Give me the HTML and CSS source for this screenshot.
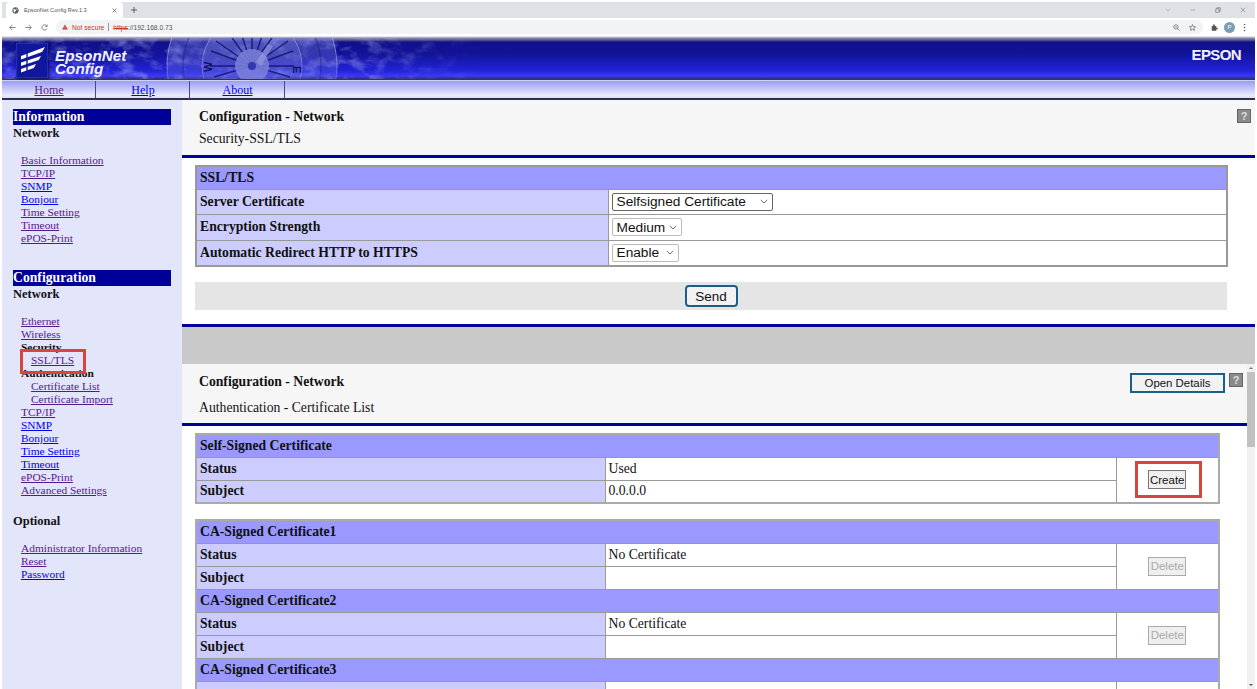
FILE: index.html
```html
<!DOCTYPE html>
<html lang="en">
<head>
<meta charset="utf-8">
<title>EpsonNet Config Rev.1.3</title>
<link rel="stylesheet" href="styles.css">
</head>
<body>
<div class="window">
  <div class="tabstrip">
    <div class="tab">
      <svg class="favicon" viewBox="0 0 10 10"><circle cx="5" cy="5" r="4.500" fill="#5f6368"/><path d="M2 2.500l3 1 1 2-2 1 0 2-1.500-2zM7 1.500l1.500 2-2 .5z" fill="#fff"/></svg>
      <span class="tab-title">EpsonNet Config Rev.1.3</span>
      <svg class="tab-x" viewBox="0 0 8 8"><path d="M1 1l6 6M7 1l-6 6" stroke="#444" stroke-width="1.100"/></svg>
    </div>
    <svg class="tab-plus" viewBox="0 0 8 8"><path d="M4 0v8M0 4h8" stroke="#444" stroke-width="1.100"/></svg>
    <div class="winbtns">
      <svg viewBox="0 0 8 8"><path d="M1 2.500l3 3 3-3" fill="none" stroke="#999" stroke-width=".8"/></svg>
      <svg viewBox="0 0 8 8"><path d="M1 4h6" stroke="#999" stroke-width=".9"/></svg>
      <svg viewBox="0 0 8 8"><path d="M1 2.500h4.500v4.500H1zM2.500 2.500V1H7v4.500H5.500" fill="none" stroke="#666" stroke-width=".8"/></svg>
      <svg viewBox="0 0 8 8"><path d="M1 1l6 6M7 1l-6 6" stroke="#777" stroke-width=".8"/></svg>
    </div>
  </div>
  <div class="toolbar">
    <svg class="nav-ic" viewBox="0 0 8 8"><path d="M7.500 4H1M3.800 1L.8 4l3 3" fill="none" stroke="#666" stroke-width=".9"/></svg>
    <svg class="nav-ic" viewBox="0 0 8 8"><path d="M.5 4H7M4.200 1l3 3-3 3" fill="none" stroke="#666" stroke-width=".9"/></svg>
    <svg class="nav-ic" viewBox="0 0 8 8"><path d="M6.800 5.200A3 3 0 1 1 6.500 2.200M7 .6v2.200H4.800" fill="none" stroke="#666" stroke-width=".9"/></svg>
    <div class="omnibox">
      <svg class="warn" viewBox="0 0 8 8"><path d="M4 .8L7.800 7.200H.2z" fill="#c5362c"/><path d="M4 3v2.200M4 5.800v.7" stroke="#fff" stroke-width=".7"/></svg>
      <span class="notsecure">Not secure</span>
      <span class="sep"></span>
      <span class="url"><span class="https">https</span>://192.168.0.73</span>
      <span class="omni-right">
        <svg viewBox="0 0 8 8"><circle cx="3.300" cy="3.300" r="2.500" fill="none" stroke="#666" stroke-width=".8"/><path d="M5.200 5.200L7.500 7.500M2 3.300h2.600" stroke="#666" stroke-width=".8"/></svg>
        <svg viewBox="0 0 10 10"><path d="M5 .8l1.300 2.900 3.100.3-2.400 2 .8 3.100L5 7.500 2.200 9.100 3 6 .6 4l3.100-.3z" fill="none" stroke="#555" stroke-width=".9"/></svg>
      </span>
    </div>
    <svg class="ext" viewBox="0 0 10 10"><path d="M1 3h2V1.500a1.200 1.200 0 0 1 2.400 0V3h2.200v2.200h1a1.200 1.200 0 0 1 0 2.400h-1V9.500H1z" fill="#555"/></svg>
    <span class="avatar">P</span>
    <svg class="dots" viewBox="0 0 4 12"><circle cx="2" cy="2" r="1" fill="#555"/><circle cx="2" cy="6" r="1" fill="#555"/><circle cx="2" cy="10" r="1" fill="#555"/></svg>
  </div>

  <div class="page">
    <header class="banner">
      <svg class="compass" viewBox="0 0 480 41">
        <defs>
          <filter id="mottle" x="0" y="0" width="100%" height="100%">
            <feTurbulence type="fractalNoise" baseFrequency="0.06 0.1" numOctaves="4" seed="7"/>
            <feColorMatrix type="matrix" values="0 0 0 0 0.42  0 0 0 0 0.45  0 0 0 0 0.95  1.700 0 0 0 -0.780"/>
          </filter>
          <linearGradient id="fade" x1="0" x2="1" y1="0" y2="0">
            <stop offset="0" stop-color="#fff" stop-opacity=".7"/>
            <stop offset=".72" stop-color="#fff" stop-opacity=".8"/>
            <stop offset="1" stop-color="#fff" stop-opacity="0"/>
          </linearGradient>
          <linearGradient id="vfade" x1="0" x2="0" y1="0" y2="1">
            <stop offset="0" stop-color="#fff" stop-opacity=".9"/>
            <stop offset=".7" stop-color="#fff" stop-opacity=".65"/>
            <stop offset="1" stop-color="#fff" stop-opacity=".45"/>
          </linearGradient>
          <mask id="mfade"><rect width="480" height="41" fill="url(#fade)"/></mask>
          <mask id="mv"><rect width="480" height="41" fill="url(#vfade)"/></mask>
        </defs>
        <rect width="480" height="41" filter="url(#mottle)" mask="url(#mfade)"/>
        <g mask="url(#mv)">
          <circle cx="250" cy="28" r="85" fill="#6a70d8" fill-opacity=".5"/>
          <circle cx="250" cy="28" r="85" fill="none" stroke="#c5c8f5" stroke-opacity=".7"/>
          <circle cx="250" cy="28" r="69" fill="none" stroke="#20236e" stroke-opacity=".5" stroke-width="1.500"/>
          <circle cx="250" cy="28" r="50" fill="#7478dc" fill-opacity=".5"/>
          <circle cx="250" cy="28" r="50" fill="none" stroke="#c9ccf5" stroke-opacity=".6"/>
        </g>
        <g stroke="#0e1158" stroke-width="1.500" stroke-opacity=".8">
          <path d="M250 28L250 -8M250 28L262 -8M250 28L238 -8M250 28L274 -6M250 28L226 -6M250 28L286 3M250 28L214 3M250 28L291 13M250 28L209 13M250 28L292 28M250 28L208 28M250 28L288 39M250 28L212 39"/>
        </g>
        <circle cx="250" cy="28" r="17" fill="#7d81da" fill-opacity=".85"/>
        <circle cx="250" cy="28" r="4" fill="#3038b0"/>
        <path d="M254 24L266 6l5 2-12 20z" fill="#9a9de2" fill-opacity=".6"/>
        <text class="cardinal" transform="translate(210 34) rotate(-90)">W</text>
        <text class="cardinal" transform="translate(291 28) rotate(90)">E</text>
      </svg>
      <div class="logo">
        <svg class="logo-mark" viewBox="0 0 32 35">
          <rect width="32" height="35" fill="#10179a" stroke="#3c45c0"/>
          <path d="M5 13L29 4l-3 5L5 16.500zM5 19.500L25 13l-2.200 4L5 23zM5 26l15-5-2.200 4L5 29.500z" fill="#fff"/>
          <path d="M11 8v22" stroke="#10179a" stroke-width="1.400"/>
        </svg>
        <div class="logo-text">EpsonNet<br>Config</div>
      </div>
      <div class="epson">EPSON</div>
    </header>
    <nav class="topnav">
      <a class="nav-cell visited" href="#home">Home</a>
      <a class="nav-cell" href="#help">Help</a>
      <a class="nav-cell" href="#about">About</a>
    </nav>

    <div class="body">
      <aside class="sidebar">
        <h2 class="side-h first">Information</h2>
        <div class="side-sub">Network</div>
        <ul class="links">
          <li><a class="visited" href="#a">Basic Information</a></li>
          <li><a class="visited" href="#a">TCP/IP</a></li>
          <li><a href="#b">SNMP</a></li>
          <li><a href="#b">Bonjour</a></li>
          <li><a class="visited" href="#a">Time Setting</a></li>
          <li><a class="visited" href="#a">Timeout</a></li>
          <li><a class="visited" href="#a">ePOS-Print</a></li>
        </ul>
        <h2 class="side-h second">Configuration</h2>
        <div class="side-sub">Network</div>
        <ul class="links">
          <li><a class="visited" href="#a">Ethernet</a></li>
          <li><a class="visited" href="#a">Wireless</a></li>
          <li class="group">Security</li>
          <li class="nested"><a class="visited" href="#a">SSL/TLS</a></li>
          <li class="group">Authentication</li>
          <li class="nested"><a class="visited" href="#a">Certificate List</a></li>
          <li class="nested"><a class="visited" href="#a">Certificate Import</a></li>
          <li><a class="visited" href="#a">TCP/IP</a></li>
          <li><a href="#b">SNMP</a></li>
          <li><a href="#b">Bonjour</a></li>
          <li><a href="#b">Time Setting</a></li>
          <li><a href="#b">Timeout</a></li>
          <li><a class="visited" href="#a">ePOS-Print</a></li>
          <li><a class="visited" href="#a">Advanced Settings</a></li>
        </ul>
        <div class="side-sub optional">Optional</div>
        <ul class="links">
          <li><a class="visited" href="#a">Administrator Information</a></li>
          <li><a class="visited" href="#a">Reset</a></li>
          <li><a href="#b">Password</a></li>
        </ul>
      </aside>

      <main class="main">
        <section class="head head-top">
          <div class="head-text">
            <div class="head-title">Configuration - Network</div>
            <div class="head-sub">Security-SSL/TLS</div>
          </div>
          <span class="help-ic">?</span>
        </section>
        <div class="rule"></div>
        <section class="form-area">
          <table class="grid ssl">
            <colgroup><col class="c-a"><col></colgroup>
            <tr class="th"><th colspan="2">SSL/TLS</th></tr>
            <tr><th>Server Certificate</th><td><span class="select s1">Selfsigned Certificate<svg viewBox="0 0 8 5"><path d="M.8 1l3.200 3 3.200-3" fill="none" stroke="#444" stroke-width=".8"/></svg></span></td></tr>
            <tr><th>Encryption Strength</th><td><span class="select s2">Medium<svg viewBox="0 0 8 5"><path d="M.8 1l3.200 3 3.200-3" fill="none" stroke="#444" stroke-width=".8"/></svg></span></td></tr>
            <tr><th>Automatic Redirect HTTP to HTTPS</th><td><span class="select s3">Enable<svg viewBox="0 0 8 5"><path d="M.8 1l3.200 3 3.200-3" fill="none" stroke="#444" stroke-width=".8"/></svg></span></td></tr>
          </table>
          <div class="sendbar"><button class="send" type="button">Send</button></div>
        </section>
        <div class="rule"></div>
        <div class="spacer"></div>
        <section class="frame">
          <div class="frame-inner">
            <section class="head head-bottom">
              <div class="head-text">
                <div class="head-title">Configuration - Network</div>
                <div class="head-sub">Authentication - Certificate List</div>
              </div>
              <button class="open" type="button">Open Details</button>
              <span class="help-ic">?</span>
            </section>
            <div class="rule"></div>
            <table class="grid cert cert-one">
              <colgroup><col class="c1"><col class="c2"><col class="c3"></colgroup>
              <tr class="th"><th colspan="3">Self-Signed Certificate</th></tr>
              <tr><th>Status</th><td>Used</td><td class="act" rowspan="2"><button class="mini" type="button">Create</button></td></tr>
              <tr><th>Subject</th><td>0.0.0.0</td></tr>
            </table>
            <table class="grid cert">
              <colgroup><col class="c1"><col class="c2"><col class="c3"></colgroup>
              <tr class="th"><th colspan="3">CA-Signed Certificate1</th></tr>
              <tr><th>Status</th><td>No Certificate</td><td class="act" rowspan="2"><button class="mini off" type="button" disabled>Delete</button></td></tr>
              <tr><th>Subject</th><td></td></tr>
              <tr class="th"><th colspan="3">CA-Signed Certificate2</th></tr>
              <tr><th>Status</th><td>No Certificate</td><td class="act" rowspan="2"><button class="mini off" type="button" disabled>Delete</button></td></tr>
              <tr><th>Subject</th><td></td></tr>
              <tr class="th"><th colspan="3">CA-Signed Certificate3</th></tr>
              <tr><th></th><td></td><td></td></tr>
            </table>
          </div>
          <div class="scrollbar">
            <span class="arrow up"></span>
            <span class="thumb"></span>
            <span class="arrow down"></span>
          </div>
        </section>
      </main>
    </div>
  </div>
  <div class="callout callout-ssl"></div>
  <div class="callout callout-create"></div>
</div>
</body>
</html>
```

FILE: styles.css
```css
* { box-sizing: border-box; }
html, body { margin: 0; padding: 0; height: 100%; overflow: hidden; background: #f4f4f4; }
body { font-family: "Liberation Serif", "Times New Roman", serif; color: #111; }
.window { position: relative; width: 1257px; height: 689px; overflow: hidden; background: #fff; display: flex; flex-direction: column; padding: 2px 2px 0; }

/* browser chrome */
.tabstrip { height: 16px; flex: none; background: #dee1e6; display: flex; align-items: center; }
.tab { width: 117px; height: 16px; margin-left: 4px; padding: 0 6px; background: #fff; border-radius: 4px 4px 0 0; display: flex; align-items: center; font: 5.600px "Liberation Sans", sans-serif; color: #555; }
.favicon { width: 7px; height: 7px; margin-right: 5px; }
.tab-title { flex: 1; white-space: nowrap; }
.tab-x { width: 5px; height: 5px; }
.tab-plus { width: 6px; height: 6px; margin-left: 8px; }
.winbtns { margin-left: auto; display: flex; gap: 19px; padding-right: 9px; }
.winbtns svg { width: 6px; height: 6px; }
.toolbar { height: 19px; flex: none; background: #fff; display: flex; align-items: center; padding-left: 7px; border-bottom: 1px solid #e4e4f0; }
.nav-ic { width: 7px; height: 7px; margin-right: 9px; }
.omnibox { width: 1147px; height: 14px; margin-left: -1px; background: #f1f3f4; border-radius: 7px; display: flex; align-items: center; padding: 0 7px 0 6px; font: 6.700px "Liberation Sans", sans-serif; color: #555; }
.warn { width: 6px; height: 6px; margin-right: 4px; }
.notsecure { color: #c5362c; }
.sep { width: 1px; height: 8px; background: #999; margin: 0 4px; }
.https { color: #c5362c; text-decoration: line-through; }
.omni-right { margin-left: auto; display: flex; gap: 9px; }
.omni-right svg { width: 7px; height: 7px; }
.ext { width: 7px; height: 7px; margin-left: 8px; }
.avatar { width: 11px; height: 11px; margin-left: 6px; border-radius: 50%; background: #7a9fb5; color: #fff; font: 6px/11px "Liberation Sans", sans-serif; text-align: center; }
.dots { width: 3px; height: 9px; margin-left: 8px; }

/* page */
.page { flex: 1; min-height: 0; display: flex; flex-direction: column; }
.banner { height: 43px; flex: none; position: relative; overflow: hidden; background: linear-gradient(#c8c8de 0, #8d8db4 1px, #5a5a90 3px, #10108a 5px, #121498 40%, #2222d8 78%, #3a3af4 91%, #30308a 96%, #30306a 100%); display: flex; align-items: flex-start; justify-content: space-between; padding: 6px 14px 0 14px; }
.compass { position: absolute; left: 0; top: 1px; width: 480px; height: 41px; }
.cardinal { font: bold 11px "Liberation Sans", sans-serif; fill: #11145e; }
.logo { position: relative; display: flex; align-items: flex-start; gap: 7px; }
.logo-mark { width: 32px; height: 35px; box-shadow: 1px 1px 3px #0a0a50; }
.logo-text { font: italic bold 15.300px/13px "Liberation Sans", sans-serif; color: #f2f2ff; margin-top: 6px; }
.epson { position: relative; font: bold 15px "Liberation Sans", sans-serif; color: #f2f2ff; letter-spacing: -.6px; margin-top: 3px; }
.topnav { height: 20px; flex: none; display: flex; background: linear-gradient(#9a9df4, #e9eafd 85%, #dcdcf0); border-top: 1px solid #d0d0f0; border-bottom: 2px solid #2e2e52; }
.nav-cell { width: 94px; padding-left: 1px; text-align: center; font-size: 12px; line-height: 19px; color: #0000ee; border-right: 1.500px solid #4a4a72; }
.nav-cell:last-child { width: 95px; }
.body { flex: 1; min-height: 0; display: flex; }

/* sidebar */
.sidebar { width: 180px; flex: none; background: #e3e5fb; padding: 9px 11px 0; }
.side-h { margin: 0; height: 16px; background: #000099; color: #fff; font-size: 13.700px; line-height: 15px; font-weight: bold; }
.side-h.second { margin-top: 25px; }
.side-sub { font-weight: bold; font-size: 12.500px; line-height: 15px; margin-top: 1px; }
.side-sub.optional { margin-top: 17px; margin-bottom: 2px; }
.links { list-style: none; margin: 13px 0 0 8px; padding: 0; font-size: 11.400px; line-height: 13px; }
.links a { color: #0000ee; }
.links a.visited, .nav-cell.visited { color: #551a8b; }
.group { font-weight: bold; color: #111; }
.nested { padding-left: 10px; }

/* main */
.main { flex: 1; min-width: 0; display: flex; flex-direction: column; background: #fff; }
.head { flex: none; background: #f6f6f6; display: flex; position: relative; padding-left: 17px; }
.head-top { height: 55px; }
.head-bottom { height: 59px; }
.head-title { font-weight: bold; font-size: 13.700px; line-height: 15px; margin-top: 9px; }
.head-sub { font-size: 13.700px; line-height: 15px; margin-top: 7px; }
.head-bottom .head-title { margin-top: 10px; }
.head-bottom .head-sub { margin-top: 11px; }
.help-ic { position: absolute; right: 4px; top: 9px; width: 14px; height: 14px; background: #8a8a8a; border: 1px solid #666; color: #ddd; font: bold 11px/12px "Liberation Sans", sans-serif; text-align: center; }
.rule { flex: none; height: 3px; background: #000099; }
.form-area { flex: none; height: 166px; padding: 7px 28px 0 13px; background: #fff; }
.grid { border-collapse: collapse; table-layout: fixed; font-size: 13.700px; background: #fff; }
.grid th { background: #ccccff; text-align: left; padding: 0 2px 0 3px; font-weight: bold; border: 1px solid #999; }
.grid .th th { background: #9999ff; }
.grid td { padding: 0 3px; border: 1px solid #999; }
.ssl { width: 1033px; border: 2px solid #999; }
.ssl .c-a { width: 412px; }
.ssl tr { height: 25px; }
.ssl tr:nth-child(n+3) { height: 26px; }
.ssl .th { height: 23px; }
.select { display: inline-flex; align-items: center; justify-content: space-between; height: 18px; padding: 0 4px; border: 1px solid #888; border-radius: 2px; font: 13.700px "Liberation Sans", sans-serif; background: #fff; vertical-align: middle; }
.select svg { width: 8px; height: 5px; }
.s1 { width: 161px; border-color: #666; }
.s2 { width: 70px; border-color: #bbb; }
.s3 { width: 67px; border-color: #bbb; }
.sendbar { height: 28px; margin-top: 15px; background: #e5e5e5; display: flex; align-items: center; justify-content: center; }
.send { width: 53px; height: 22px; padding: 0; background: #f2f2f2; border: 2px solid #1a5f8a; border-radius: 4px; font: 13.500px "Liberation Sans", sans-serif; color: #111; }
.spacer { flex: none; height: 37px; background: #c9c9c9; }
.frame { flex: 1; min-height: 0; display: flex; overflow: hidden; position: relative; }
.frame-inner { flex: 1; min-width: 0; overflow: hidden; }
.open { position: absolute; right: 22px; top: 9px; width: 95px; height: 20px; padding: 0; background: #f2f2f2; border: 2px solid #1a5f8a; font: 11.400px "Liberation Sans", sans-serif; color: #111; }
.cert { width: 1025px; margin-left: 13px; border: 2px solid #aaa; }
.cert-one { margin-top: 7px; margin-bottom: 15px; }
.cert tr { height: 23px; }
.cert .c1 { width: 409px; }
.cert .c2 { width: 511px; }
.cert td:not(.act) { padding-left: 3px; }
.act { text-align: center; padding-bottom: 2px; }
.mini { height: 19px; width: 38px; padding: 0; background: #efefef; border: 1px solid #777; font: 11.500px "Liberation Sans", sans-serif; color: #111; }
.mini.off { color: #aaa; border-color: #aaa; }
.scrollbar { width: 8px; flex: none; background: #f1f1f1; display: flex; flex-direction: column; align-items: stretch; }
.arrow { height: 8px; flex: none; position: relative; }
.arrow::after { content: ""; position: absolute; left: 2px; top: 3px; border-left: 2px solid transparent; border-right: 2px solid transparent; }
.up::after { border-bottom: 2px solid #777; }
.down::after { border-top: 2px solid #555; }
.thumb { height: 75px; background: #c1c1c1; margin-bottom: auto; }

/* annotations */
.callout { position: absolute; border: 3px solid #d9453a; }
.callout-ssl { left: 20px; top: 349px; width: 66px; height: 25px; }
.callout-create { left: 1135px; top: 461px; width: 67px; height: 37px; }
```
